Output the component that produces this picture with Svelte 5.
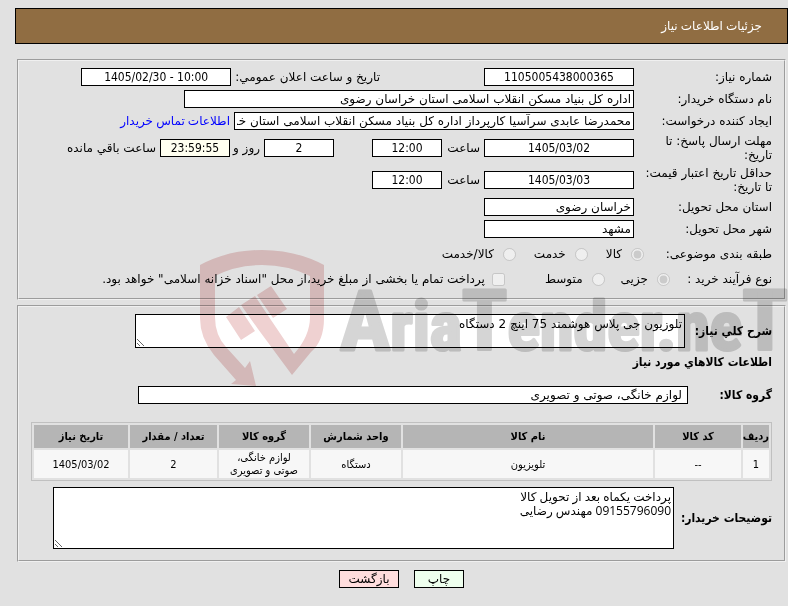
<script lang="ts">
  const goods = [
    { row: 1, code: "--", name: "تلویزیون", unit: "دستگاه", group: "لوازم خانگی، صوتی و تصویری", qty: 2, date: "1405/03/02" },
  ];

  const subjects = ["کالا", "خدمت", "کالا/خدمت"];
  const processes = ["جزیی", "متوسط"];

  let overview = "تلوزیون جی پلاس هوشمند 75 اینچ 2 دستگاه";
  let notes = "پرداخت یکماه بعد از تحویل کالا\n09155796090 مهندس رضایی";
</script>

<div class="page" dir="rtl">
  <header class="titlebar">جزئیات اطلاعات نیاز</header>

  <main>
    <section class="panel info">
      <div class="row">
        <label class="name" for="number">شماره نیاز:</label>
        <input id="number" class="w150 num" value="1105005438000365" readonly />
        <label class="announce" for="announced">تاریخ و ساعت اعلان عمومي:</label>
        <input id="announced" class="w150 num" value="1405/02/30 - 10:00" readonly />
      </div>
      <div class="row">
        <label class="name" for="buyer">نام دستگاه خریدار:</label>
        <input id="buyer" class="w450" value="اداره کل بنیاد مسکن انقلاب اسلامی استان خراسان رضوی" readonly />
      </div>
      <div class="row">
        <label class="name" for="creator">ایجاد کننده درخواست:</label>
        <input id="creator" class="w400" value="محمدرضا عابدی سرآسیا کارپرداز اداره کل بنیاد مسکن انقلاب اسلامی استان خراسان رضوی" readonly />
        <a href="#contact">اطلاعات تماس خریدار</a>
      </div>
      <div class="row tall">
        <label class="name" for="deadline">مهلت ارسال پاسخ: تا<br />تاریخ:</label>
        <input id="deadline" class="w150 num" value="1405/03/02" readonly />
        <label class="unit" for="deadline-time">ساعت</label>
        <input id="deadline-time" class="w70 num" value="12:00" readonly />
        <input id="days" class="w70 num days" value="2" readonly />
        <label class="and" for="days">روز و</label>
        <input id="left" class="w70 num left" value="23:59:55" readonly />
        <label for="left">ساعت باقي مانده</label>
      </div>
      <div class="row tall">
        <label class="name" for="validity">حداقل تاریخ اعتبار قیمت:<br />تا تاریخ:</label>
        <input id="validity" class="w150 num" value="1405/03/03" readonly />
        <label class="unit" for="validity-time">ساعت</label>
        <input id="validity-time" class="w70 num" value="12:00" readonly />
      </div>
      <div class="row">
        <label class="name" for="province">استان محل تحویل:</label>
        <input id="province" class="w150" value="خراسان رضوی" readonly />
      </div>
      <div class="row">
        <label class="name" for="city">شهر محل تحویل:</label>
        <input id="city" class="w150" value="مشهد" readonly />
      </div>
      <div class="row subject">
        <span class="name">طبقه بندی موضوعی:</span>
        {#each subjects as subject, i}
          <label class="option"><input type="radio" name="subject" checked={i === 0} disabled />{subject}</label>
        {/each}
      </div>
      <div class="row process">
        <span class="name">نوع فرآیند خرید :</span>
        {#each processes as process, i}
          <label class="option"><input type="radio" name="process" checked={i === 0} disabled />{process}</label>
        {/each}
        <label class="option treasury">
          <input type="checkbox" disabled />پرداخت تمام یا بخشی از مبلغ خرید،از محل "اسناد خزانه اسلامی" خواهد بود.
        </label>
      </div>
    </section>

    <section class="panel items">
      <div class="line">
        <label class="l-overview" for="overview">شرح کلي نیاز:</label>
        <textarea id="overview" class="short" readonly value={overview}></textarea>
      </div>
      <h2>اطلاعات کالاهاي مورد نیاز</h2>
      <div class="line">
        <label class="l-group" for="group">گروه کالا:</label>
        <input id="group" class="w550" value="لوازم خانگی، صوتی و تصویری" readonly />
      </div>
      <table>
        <colgroup>
          <col class="c-row" /><col class="c-code" /><col /><col class="c-unit" />
          <col class="c-unit" /><col class="c-qty" /><col class="c-date" />
        </colgroup>
        <thead>
          <tr>
            <th>ردیف</th>
            <th>کد کالا</th>
            <th>نام کالا</th>
            <th>واحد شمارش</th>
            <th>گروه کالا</th>
            <th>تعداد / مقدار</th>
            <th>تاریخ نیاز</th>
          </tr>
        </thead>
        <tbody>
          {#each goods as g}
            <tr>
              <td>{g.row}</td>
              <td>{g.code}</td>
              <td>{g.name}</td>
              <td>{g.unit}</td>
              <td>{g.group}</td>
              <td>{g.qty}</td>
              <td>{g.date}</td>
            </tr>
          {/each}
        </tbody>
      </table>
      <div class="line">
        <label class="l-notes" for="notes">توضیحات خریدار:</label>
        <textarea id="notes" class="long" readonly value={notes}></textarea>
      </div>
    </section>

    <div class="actions">
      <button type="button" class="print">چاپ</button>
      <button type="button" class="back">بازگشت</button>
    </div>
  </main>

  <svg class="watermark" viewBox="0 0 598 150" aria-hidden="true">
    <g class="shield">
      <path d="M10 25 Q38 10 72 10 Q106 10 134 25 V78 Q134 101 121 112 L102 135 L68 89 L51 65 L65 56 L81 80 L104 114 Q120 96 120 77 V36 Q98 25 72 25 Q46 25 25 36 V77 Q25 95 36 107 L55 128 L60 121 L66 146 L41 144 L46 140 L24 115 Q10 98 10 78 Z" />
      <path d="M36 77 L49 67 L65 91 L51 100 Z" />
      <path d="M67 55 L81 46 L97 69 L83 78 Z" />
    </g>
    <text x="150" y="110"><tspan class="cap">A</tspan>ria<tspan class="cap">T</tspan>ender.ne<tspan class="cap">T</tspan></text>
  </svg>
</div>

<style>
  :global(body) {
    background: #e1e1e1;
  }

  .page {
    position: relative;
    padding-top: 8px;
    font: 12px/14px "DejaVu Sans", sans-serif;
    color: #000;
  }

  .titlebar {
    margin-left: 15px;
    padding: 10px 25px;
    border: 1px solid #000;
    background: #906d42;
    color: #fff;
    font-family: "Open Sans", "DejaVu Sans", sans-serif;
  }

  main {
    padding: 15px 2px 0 17px;
  }

  .panel {
    border: 2px groove #f0f0f0;
    padding: 5px 12px 8px;
  }

  .items {
    margin-top: 5px;
    padding: 7px 12px 11px;
  }

  .row {
    display: flex;
    align-items: center;
    gap: 4px;
    min-height: 22px;
    white-space: nowrap;
  }
  .tall { min-height: 32px; }

  .name {
    flex: none;
    width: 134px;
  }

  input, textarea, button {
    box-sizing: border-box;
    margin: 0;
    font: inherit;
    color: #000;
  }

  input:not([type]), textarea {
    border: 1px solid #000;
    border-radius: 0;
    background: #fff;
    padding: 0 2px;
    outline: none;
  }
  input:not([type]) { height: 18px; }

  .w70 { width: 70px; }
  .w150 { width: 150px; }
  .w400 { width: 400px; }
  .w450 { width: 450px; }
  .w550 { width: 550px; }

  input.num {
    direction: ltr;
    text-align: center;
    font-family: "DejaVu Sans Condensed", "DejaVu Sans", sans-serif;
  }

  .announce { margin-right: 100px; }
  .unit { width: 34px; }
  .days { margin-right: 34px; }
  .and { width: 26px; }
  input.left { background: #fffff0; }

  a {
    color: #00f;
    font-family: "Open Sans", "DejaVu Sans", sans-serif;
    text-decoration: none;
  }

  .subject {
    min-height: 28px;
    gap: 18px;
  }
  .subject .name { width: 110px; }

  .process { gap: 16px; }
  .process .name { width: 86px; }

  .option {
    display: flex;
    align-items: center;
    gap: 9px;
  }
  .option input {
    width: 13px;
    height: 13px;
  }
  .treasury {
    gap: 7px;
    margin-right: 24px;
  }

  .line {
    display: flex;
    align-items: center;
  }
  .line label, h2 {
    flex: none;
    font: bold 12px/14px "DejaVu Sans Condensed", "DejaVu Sans", sans-serif;
    white-space: nowrap;
  }
  .line .l-overview { width: 87px; }
  .line .l-group { width: 84px; }
  .line .l-notes { width: 98px; }

  h2 { margin: 7px 0 17px; }

  textarea { padding: 2px; }
  .short {
    width: 550px;
    height: 34px;
  }
  .long {
    width: 621px;
    height: 62px;
    font-family: "Open Sans", "DejaVu Sans", sans-serif;
  }
  #group { padding: 0 5px; }

  table {
    width: 100%;
    margin: 18px 0 6px;
    table-layout: fixed;
    border: 1px solid #c0c0c0;
    border-spacing: 2px;
    font: 11px/13px "DejaVu Sans Condensed", "DejaVu Sans", sans-serif;
    text-align: center;
  }
  th {
    height: 23px;
    padding: 0;
    background: #b5b5b5;
    white-space: nowrap;
  }
  td {
    height: 28px;
    padding: 0 8px;
    background: #f7f7f7;
  }
  td:first-child { padding: 0; }
  .c-row { width: 26px; }
  .c-code { width: 86px; }
  .c-unit { width: 90px; }
  .c-qty { width: 87px; }
  .c-date { width: 94px; }

  .actions {
    display: flex;
    justify-content: center;
    gap: 15px;
    margin-top: 8px;
  }
  .actions button {
    height: 18px;
    padding: 0;
    border: 1px solid #000;
  }
  .print {
    width: 50px;
    background: #efe;
  }
  .back {
    width: 60px;
    background: #fdd;
  }

  .watermark {
    position: absolute;
    top: 240px;
    left: 190px;
    width: 598px;
    height: 150px;
    direction: ltr;
    mix-blend-mode: multiply;
    pointer-events: none;
    font: bold 68px "Liberation Sans Narrow", "Roboto Condensed", "Liberation Sans", sans-serif;
  }
  .watermark text {
    fill: #d5d5d5;
    stroke: #d5d5d5;
    stroke-width: 3px;
    stroke-linejoin: round;
  }
  .cap { font-size: 84px; }
  .shield { fill: #efd1d1; }
</style>
